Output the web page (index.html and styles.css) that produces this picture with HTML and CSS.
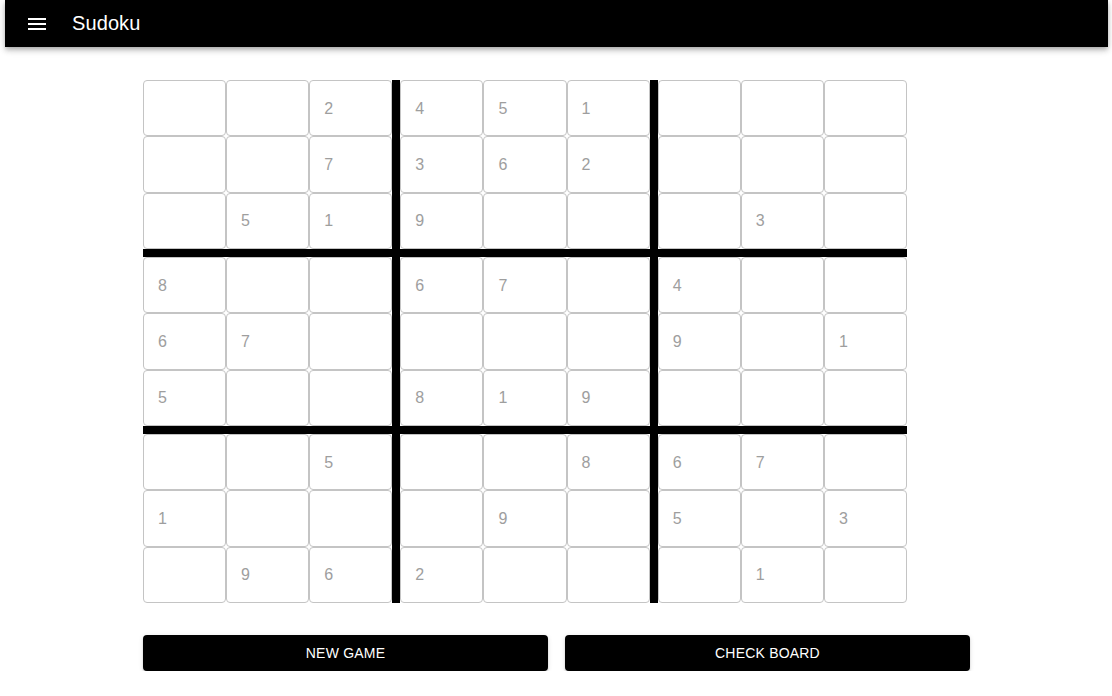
FILE: index.html
```html
<!DOCTYPE html>
<html lang="en">
<head>
  <meta charset="UTF-8" />
  <meta name="viewport" content="width=device-width, initial-scale=1.0" />
  <title>Sudoku</title>
  <link rel="stylesheet" href="styles.css">
</head>
<body>
  <header class="appbar">
    <button class="menu-btn" aria-label="menu">
      <svg viewBox="0 0 24 24" width="24" height="24"><path fill="#fff" d="M3 18h18v-2H3v2zm0-5h18v-2H3v2zm0-7v2h18V6H3z"/></svg>
    </button>
    <h1>Sudoku</h1>
  </header>

  <main class="game">
    <div class="board" id="board"></div>
    <div class="actions">
      <button class="btn">New Game</button>
      <button class="btn">Check Board</button>
    </div>
  </main>

  <script>
    // puzzle rows, 0 = empty
    const puzzle = [
      [0,0,2, 4,5,1, 0,0,0],
      [0,0,7, 3,6,2, 0,0,0],
      [0,5,1, 9,0,0, 0,3,0],
      [8,0,0, 6,7,0, 4,0,0],
      [6,7,0, 0,0,0, 9,0,1],
      [5,0,0, 8,1,9, 0,0,0],
      [0,0,5, 0,0,8, 6,7,0],
      [1,0,0, 0,9,0, 5,0,3],
      [0,9,6, 2,0,0, 0,1,0]
    ];

    const board = document.getElementById("board");
    for (let b = 0; b < 9; b++) {
      const box = document.createElement("div");
      box.className = "box";
      const br = Math.floor(b / 3) * 3, bc = (b % 3) * 3;
      for (let i = 0; i < 9; i++) {
        const r = br + Math.floor(i / 3), c = bc + (i % 3);
        const cell = document.createElement("div");
        cell.className = "cell";
        cell.textContent = puzzle[r][c] || "";
        box.appendChild(cell);
      }
      board.appendChild(box);
    }
  </script>
</body>
</html>
```

FILE: styles.css
```css
* { margin: 0; padding: 0; box-sizing: border-box; }
body {
  font-family: "Liberation Sans", Arial, sans-serif;
  background: #fff;
  color: #000;
}
.appbar {
  margin: 0 4px 0 5px;
  height: 47px;
  background: #000;
  color: #fff;
  display: flex;
  align-items: center;
  padding: 0 20px;
  box-shadow: 0 2px 4px -1px rgba(0,0,0,0.2), 0 4px 5px 0 rgba(0,0,0,0.14), 0 1px 10px 0 rgba(0,0,0,0.12);
}
.menu-btn {
  background: none;
  border: none;
  width: 24px;
  height: 24px;
  display: flex;
  margin-right: 23px;
}
.appbar h1 {
  font-size: 20px;
  font-weight: 400;
  letter-spacing: 0.1px;
}
.game {
  width: 828px;
  margin: 33px auto 0;
  padding-left: 1px;
}
.board {
  width: 764px;
  display: grid;
  grid-template-columns: repeat(3, 1fr);
  gap: 8px;
  background: #000;
}
.box {
  display: grid;
  grid-template-columns: repeat(3, 1fr);
  grid-template-rows: repeat(3, 1fr);
  height: 169px;
  background: #fff;
}
.cell {
  border: 1px solid #c4c4c4;
  border-radius: 4px;
  display: flex;
  align-items: center;
  padding: 1px 0 0 14px;
  font-size: 16px;
  color: #9e9e9e;
}
.actions {
  display: grid;
  grid-template-columns: 1fr 1fr;
  gap: 17px;
  margin-top: 32px;
}
.btn {
  height: 36px;
  background: #000;
  color: #fff;
  border: none;
  border-radius: 4px;
  font-family: inherit;
  font-size: 14px;
  text-transform: uppercase;
  letter-spacing: 0.2px;
  box-shadow: 0 3px 1px -2px rgba(0,0,0,0.2), 0 2px 2px 0 rgba(0,0,0,0.14), 0 1px 5px 0 rgba(0,0,0,0.12);
  cursor: pointer;
}
```
